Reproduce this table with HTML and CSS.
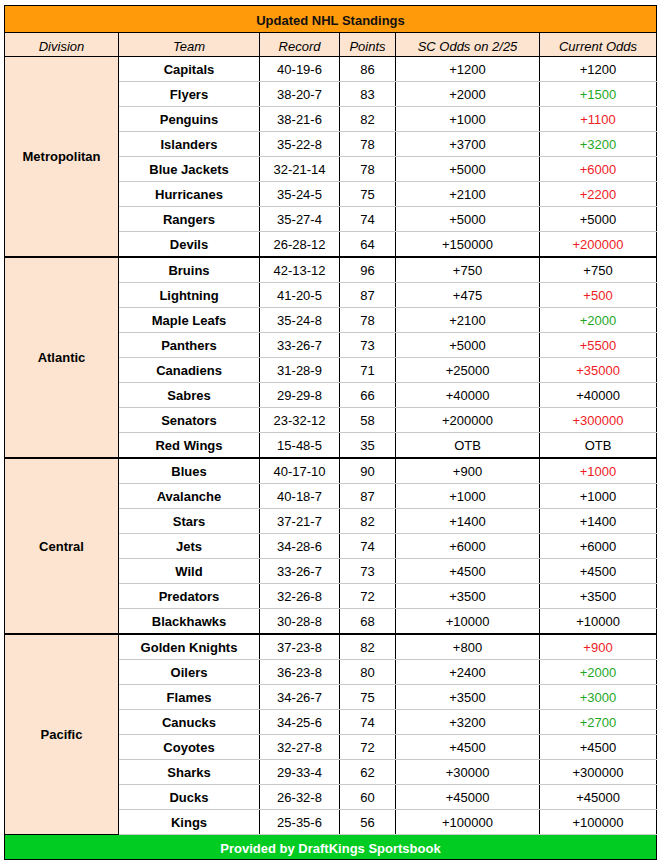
FILE: index.html
```html
<!DOCTYPE html>
<html>
<head>
<meta charset="utf-8">
<link rel="stylesheet" href="styles.css">
</head>
<body>
<table class="standings">
  <colgroup>
    <col class="c-div"><col class="c-team"><col class="c-rec"><col class="c-pts"><col class="c-sc"><col class="c-cur">
  </colgroup>
  <thead>
    <tr class="title-row"><th colspan="6">Updated NHL Standings</th></tr>
    <tr class="head-row">
      <th>Division</th><th>Team</th><th>Record</th><th>Points</th><th>SC Odds on 2/25</th><th>Current Odds</th>
    </tr>
  </thead>
  <tbody>
    <tr class="first"><td class="div" rowspan="8">Metropolitan</td><td class="team">Capitals</td><td>40-19-6</td><td>86</td><td>+1200</td><td>+1200</td></tr>
    <tr><td class="team">Flyers</td><td>38-20-7</td><td>83</td><td>+2000</td><td class="up">+1500</td></tr>
    <tr><td class="team">Penguins</td><td>38-21-6</td><td>82</td><td>+1000</td><td class="down">+1100</td></tr>
    <tr><td class="team">Islanders</td><td>35-22-8</td><td>78</td><td>+3700</td><td class="up">+3200</td></tr>
    <tr><td class="team">Blue Jackets</td><td>32-21-14</td><td>78</td><td>+5000</td><td class="down">+6000</td></tr>
    <tr><td class="team">Hurricanes</td><td>35-24-5</td><td>75</td><td>+2100</td><td class="down">+2200</td></tr>
    <tr><td class="team">Rangers</td><td>35-27-4</td><td>74</td><td>+5000</td><td>+5000</td></tr>
    <tr><td class="team">Devils</td><td>26-28-12</td><td>64</td><td>+150000</td><td class="down">+200000</td></tr>

    <tr class="first grp"><td class="div" rowspan="8">Atlantic</td><td class="team">Bruins</td><td>42-13-12</td><td>96</td><td>+750</td><td>+750</td></tr>
    <tr><td class="team">Lightning</td><td>41-20-5</td><td>87</td><td>+475</td><td class="down">+500</td></tr>
    <tr><td class="team">Maple Leafs</td><td>35-24-8</td><td>78</td><td>+2100</td><td class="up">+2000</td></tr>
    <tr><td class="team">Panthers</td><td>33-26-7</td><td>73</td><td>+5000</td><td class="down">+5500</td></tr>
    <tr><td class="team">Canadiens</td><td>31-28-9</td><td>71</td><td>+25000</td><td class="down">+35000</td></tr>
    <tr><td class="team">Sabres</td><td>29-29-8</td><td>66</td><td>+40000</td><td>+40000</td></tr>
    <tr><td class="team">Senators</td><td>23-32-12</td><td>58</td><td>+200000</td><td class="down">+300000</td></tr>
    <tr><td class="team">Red Wings</td><td>15-48-5</td><td>35</td><td>OTB</td><td>OTB</td></tr>

    <tr class="first grp"><td class="div" rowspan="7">Central</td><td class="team">Blues</td><td>40-17-10</td><td>90</td><td>+900</td><td class="down">+1000</td></tr>
    <tr><td class="team">Avalanche</td><td>40-18-7</td><td>87</td><td>+1000</td><td>+1000</td></tr>
    <tr><td class="team">Stars</td><td>37-21-7</td><td>82</td><td>+1400</td><td>+1400</td></tr>
    <tr><td class="team">Jets</td><td>34-28-6</td><td>74</td><td>+6000</td><td>+6000</td></tr>
    <tr><td class="team">Wild</td><td>33-26-7</td><td>73</td><td>+4500</td><td>+4500</td></tr>
    <tr><td class="team">Predators</td><td>32-26-8</td><td>72</td><td>+3500</td><td>+3500</td></tr>
    <tr><td class="team">Blackhawks</td><td>30-28-8</td><td>68</td><td>+10000</td><td>+10000</td></tr>

    <tr class="first grp"><td class="div" rowspan="8">Pacific</td><td class="team">Golden Knights</td><td>37-23-8</td><td>82</td><td>+800</td><td class="down">+900</td></tr>
    <tr><td class="team">Oilers</td><td>36-23-8</td><td>80</td><td>+2400</td><td class="up">+2000</td></tr>
    <tr><td class="team">Flames</td><td>34-26-7</td><td>75</td><td>+3500</td><td class="up">+3000</td></tr>
    <tr><td class="team">Canucks</td><td>34-25-6</td><td>74</td><td>+3200</td><td class="up">+2700</td></tr>
    <tr><td class="team">Coyotes</td><td>32-27-8</td><td>72</td><td>+4500</td><td>+4500</td></tr>
    <tr><td class="team">Sharks</td><td>29-33-4</td><td>62</td><td>+30000</td><td>+300000</td></tr>
    <tr><td class="team">Ducks</td><td>26-32-8</td><td>60</td><td>+45000</td><td>+45000</td></tr>
    <tr><td class="team">Kings</td><td>25-35-6</td><td>56</td><td>+100000</td><td>+100000</td></tr>
  </tbody>
  <tfoot>
    <tr class="foot-row"><td colspan="6">Provided by DraftKings Sportsbook</td></tr>
  </tfoot>
</table>
</body>
</html>
```

FILE: styles.css
```css
html, body {
  margin: 0;
  padding: 0;
  background: #ffffff;
}

body {
  padding: 5px 0 0 4px;
  font-family: "Liberation Sans", Arial, sans-serif;
  font-size: 13px;
  color: #000000;
}

.standings {
  border-collapse: collapse;
  table-layout: fixed;
  width: 652px;
  border: 1px solid #000000;
}

.c-div { width: 114px; }
.c-team { width: 141px; }
.c-rec { width: 80px; }
.c-pts { width: 56px; }
.c-sc { width: 144px; }
.c-cur { width: 117px; }

.standings th,
.standings td {
  padding: 0;
  text-align: center;
  vertical-align: middle;
  white-space: nowrap;
  border-left: 1px solid #000000;
  border-right: 1px solid #000000;
  border-top: 1px solid #c9c9c9;
  border-bottom: 1px solid #c9c9c9;
}

.title-row th {
  background: #ff9a0a;
  font-weight: bold;
  height: 24px;
  padding-top: 2px;
  color: #111111;
  border: 1px solid #000000;
}

.head-row th {
  background: #fce4d0;
  font-weight: normal;
  font-style: italic;
  height: 20px;
  padding-top: 3px;
  border-top: 1px solid #000000;
  border-bottom: 1px solid #000000;
}

.standings tbody td {
  height: 24px;
}

.standings tbody tr.first td {
  border-top: 1px solid #000000;
}

.standings tbody tr.grp td {
  border-top: 2px solid #000000;
}

.standings td.div {
  background: #fce4d0;
  font-weight: bold;
  border-top: 1px solid #000000;
  border-bottom: 1px solid #000000;
}

.standings tbody tr.grp td.div {
  border-top: 2px solid #000000;
}

.team {
  font-weight: bold;
}

.up {
  color: #1fa81f;
}

.down {
  color: #ee1c25;
}

.foot-row td {
  background: #00cc22;
  color: #ffffff;
  font-weight: bold;
  height: 21px;
  padding-top: 3px;
  border: 1px solid #000000;
}
```
